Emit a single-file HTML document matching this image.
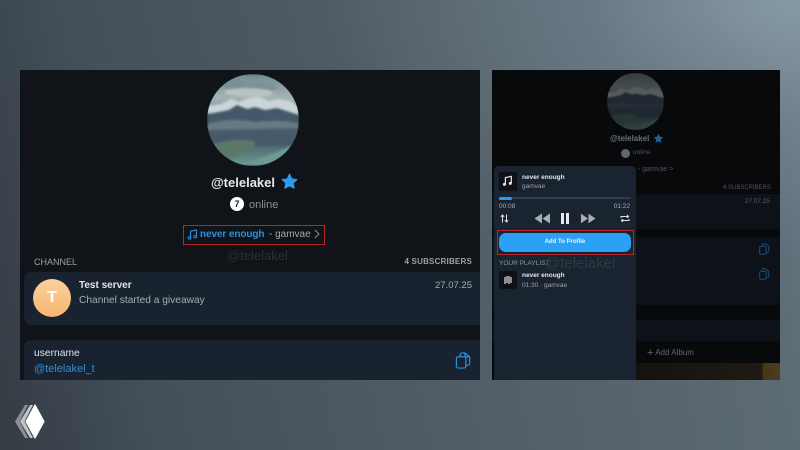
<!DOCTYPE html>
<html><head><meta charset="utf-8">
<style>
html,body{margin:0;padding:0}
body{width:800px;height:450px;overflow:hidden;position:relative;font-family:"Liberation Sans",sans-serif;background:linear-gradient(78deg,#343c44 0%,#444f57 18%,#525e67 55%,#5d6b75 90%,#6a7a85 100%)}
.bg2{position:absolute;inset:0;background:radial-gradient(ellipse 480px 260px at 800px 0,#8699a6 0%,rgba(134,153,166,.35) 45%,rgba(134,153,166,0) 100%)}
.a{position:absolute;white-space:nowrap}
.panel{position:absolute;overflow:hidden}
</style></head><body>
<div class="bg2"></div>

<div class="panel" style="left:20px;top:70px;width:460px;height:310px;background:#101317">
  <svg class="a" style="left:187px;top:4px" width="92" height="92" viewBox="0 0 92 92">
    <defs>
      <clipPath id="c1"><circle cx="46" cy="46" r="46"/></clipPath>
      <linearGradient id="sky" x1="0" y1="0" x2="0" y2="1"><stop offset="0" stop-color="#708a90"/><stop offset=".26" stop-color="#a6b4b4"/><stop offset=".5" stop-color="#5d717d"/><stop offset=".72" stop-color="#465c68"/><stop offset="1" stop-color="#6d9b94"/></linearGradient>
    </defs>
    <g clip-path="url(#c1)"><g style="filter:blur(1px)">
      <rect width="92" height="92" fill="url(#sky)"/>
      <path d="M10 6 Q30 2 42 10 Q55 6 72 14 L60 18 Q40 14 28 18 Q16 16 10 6Z" fill="#7b9096"/>
      <path d="M18 16 Q40 12 62 16 Q70 20 60 22 Q36 24 18 20Z" fill="#b9c3c2"/>
      <path d="M0 32 L14 30 L24 25 L32 28 L42 24 L52 23 L62 27 L72 25 L84 27 L92 34 L92 46 L0 46Z" fill="#cbd4d8"/>
      <path d="M0 40 L12 38 L22 36 L30 31 L40 35 L48 33 L58 36 L70 34 L92 41 L92 50 L0 50Z" fill="#43596a"/>
      <path d="M0 50 Q24 43 48 48 Q70 45 92 49 L92 58 L0 58Z" fill="#667a84"/>
      <path d="M0 56 L92 54 L92 72 L0 72Z" fill="#44586a" opacity=".85"/>
      <path d="M0 72 Q22 64 42 66 Q52 68 46 74 Q30 84 16 88 L0 86Z" fill="#5a7868"/>
      <path d="M25 92 Q60 84 92 68 L92 92Z" fill="#6b9b94"/>
    </g></g>
  </svg>
  <div class="a" style="left:191px;top:105px;font-size:13px;font-weight:bold;color:#e6e8ea">@telelakel</div>
  <svg class="a" style="left:261px;top:103px" width="17" height="17" viewBox="0 0 24 24"><path d="M12 1.500l3.200 6.800 7.300.9-5.400 5 1.500 7.300L12 18l-6.600 3.500 1.500-7.300-5.400-5 7.300-.9z" fill="#2a9bf0" stroke="#2a9bf0" stroke-width="1.500" stroke-linejoin="round"/></svg>
  <div class="a" style="left:210px;top:127px;width:14px;height:14px;border-radius:50%;background:#fff;color:#15181c;font-size:9px;font-weight:bold;text-align:center;line-height:14px">7</div>
  <div class="a" style="left:229px;top:129px;font-size:11px;color:#8b9196">online</div>
  <div class="a" style="left:163px;top:155px;width:140px;height:18px;border:1px solid #b3272d"></div>
  <svg class="a" style="left:167px;top:159px" width="11" height="11" viewBox="0 0 13 14"><path d="M4 11V2.800L11.500 1.200V9.500" fill="none" stroke="#2a8fdc" stroke-width="1.400"/><ellipse cx="2.600" cy="11.300" rx="1.800" ry="1.500" fill="none" stroke="#2a8fdc" stroke-width="1.300"/><ellipse cx="10" cy="9.800" rx="1.800" ry="1.500" fill="none" stroke="#2a8fdc" stroke-width="1.300"/></svg>
  <div class="a" style="left:180px;top:159px;font-size:10px;font-weight:bold;color:#2a8fdc;letter-spacing:-.1px">never enough</div>
  <div class="a" style="left:249px;top:159px;font-size:10px;color:#a4a8ad">- gamvae</div>
  <svg class="a" style="left:294px;top:159px" width="6" height="10" viewBox="0 0 6 10"><path d="M1 1l4 4-4 4" fill="none" stroke="#8b9196" stroke-width="1"/></svg>
  <div class="a" style="left:207px;top:178px;font-size:13px;color:#2b3036">@telelakel</div>
  <div class="a" style="left:14px;top:187px;font-size:9px;color:#9ba1a7">CHANNEL</div>
  <div class="a" style="right:8px;top:187px;font-size:8px;font-weight:bold;color:#9ba1a7;letter-spacing:.2px">4 SUBSCRIBERS</div>
  <div class="a" style="left:4px;top:202px;width:456px;height:53px;background:#18232f;border-radius:7px 0 0 7px"></div>
  <div class="a" style="left:13px;top:209px;width:38px;height:38px;border-radius:50%;background:linear-gradient(#fcd29c,#f5b56f);color:#fff;font-size:16px;font-weight:bold;text-align:center;line-height:37px">T</div>
  <div class="a" style="left:59px;top:210px;font-size:10px;font-weight:bold;color:#e3e6e9">Test server</div>
  <div class="a" style="left:59px;top:225px;font-size:10.200px;color:#a5acb3">Channel started a giveaway</div>
  <div class="a" style="right:8px;top:210px;font-size:9.500px;color:#a5acb3">27.07.25</div>
  <div class="a" style="left:4px;top:270px;width:456px;height:40px;background:#18232f;border-radius:7px 0 0 0"></div>
  <div class="a" style="left:14px;top:278px;font-size:10.300px;color:#dfe3e6">username</div>
  <div class="a" style="left:14px;top:293px;font-size:11px;color:#2f8ed6">@telelakel_t</div>
  <svg class="a" style="left:435px;top:282px" width="17" height="17" viewBox="0 0 17 18" fill="none" stroke="#2a8fdc" stroke-width="1.300"><rect x="1" y="5" width="10" height="12" rx="2"/><path d="M5 5V3a2 2 0 0 1 2-2h3l5 4v7a2 2 0 0 1-2 2h-2"/><path d="M10 1v4h5"/></svg>
</div>

<div class="panel" style="left:492px;top:70px;width:288px;height:310px;background:#08090b">
  <svg class="a" style="left:115px;top:3px" width="57" height="57" viewBox="0 0 92 92" opacity=".4">
    <g clip-path="url(#c1)"><g style="filter:blur(1.500px)">
      <rect width="92" height="92" fill="url(#sky)"/>
      <path d="M0 32 L14 30 L24 25 L32 28 L42 24 L52 23 L62 27 L72 25 L84 27 L92 34 L92 46 L0 46Z" fill="#cbd4d8"/>
      <path d="M0 40 L12 38 L22 36 L30 31 L40 35 L48 33 L58 36 L70 34 L92 41 L92 50 L0 50Z" fill="#43596a"/>
      <path d="M0 56 L92 54 L92 72 L0 72Z" fill="#44586a"/>
      <path d="M0 72 Q22 64 42 66 Q52 68 46 74 Q30 84 16 88 L0 86Z" fill="#5a7868"/>
      <path d="M25 92 Q60 84 92 68 L92 92Z" fill="#6b9b94"/>
    </g></g>
  </svg>
  <div class="a" style="left:118px;top:64px;font-size:8px;font-weight:bold;color:#6a6f75">@telelakel</div>
  <svg class="a" style="left:161px;top:63px" width="11" height="11" viewBox="0 0 24 24"><path d="M12 1.500l3.200 6.800 7.300.9-5.400 5 1.500 7.300L12 18l-6.600 3.500 1.500-7.300-5.400-5 7.300-.9z" fill="#1d6297"/></svg>
  <div class="a" style="left:129px;top:79px;width:9px;height:9px;border-radius:50%;background:#62676c"></div>
  <div class="a" style="left:141px;top:79px;font-size:6.500px;color:#50545a">online</div>
  <div class="a" style="left:146px;top:96px;font-size:7px;color:#50545a">- gamvae &gt;</div>
  <div class="a" style="right:9px;top:115px;font-size:6px;color:#50545a">4 SUBSCRIBERS</div>
  <div class="a" style="left:0;top:124px;width:288px;height:35px;background:#0c1218"></div>
  <div class="a" style="right:10px;top:128px;font-size:6.500px;color:#5a5f65">27.07.25</div>
  <div class="a" style="left:0;top:167px;width:288px;height:68px;background:#0c1218"></div>
  <svg class="a" style="left:267px;top:173px" width="11" height="12" viewBox="0 0 17 18" fill="none" stroke="#174a72" stroke-width="1.600"><rect x="1" y="5" width="10" height="12" rx="2"/><path d="M5 5V3a2 2 0 0 1 2-2h3l5 4v7a2 2 0 0 1-2 2h-2"/></svg>
  <svg class="a" style="left:267px;top:198px" width="11" height="12" viewBox="0 0 17 18" fill="none" stroke="#174a72" stroke-width="1.600"><rect x="1" y="5" width="10" height="12" rx="2"/><path d="M5 5V3a2 2 0 0 1 2-2h3l5 4v7a2 2 0 0 1-2 2h-2"/></svg>
  <div class="a" style="left:0;top:250px;width:288px;height:21px;background:#0c1218"></div>
  <div class="a" style="left:155px;top:277px;font-size:8px;color:#63686d"><span style="font-size:11px;vertical-align:-1px">+</span> Add Album</div>
  <div class="a" style="left:144px;top:293px;width:144px;height:17px;background:linear-gradient(90deg,#15120e 0,#1f1a13 88%,#45351a 88%,#4e3c1c 100%)"></div>
</div>

<div class="a" style="left:494px;top:166px;width:142px;height:214px;background:#1a2430;border-radius:5px 5px 0 0"></div>
<div class="a" style="left:499px;top:172px;width:18px;height:19px;background:#0e1115;border-radius:2px"></div>
<svg class="a" style="left:502px;top:175px" width="11" height="12" viewBox="0 0 13 14"><path d="M4 11V3L11 1.500V9.500" fill="none" stroke="#e6e8ea" stroke-width="1.400"/><circle cx="2.800" cy="11" r="1.800" fill="#e6e8ea"/><circle cx="9.800" cy="9.800" r="1.800" fill="#e6e8ea"/></svg>
<div class="a" style="left:522px;top:174px;font-size:6.500px;font-weight:bold;color:#e3e6e9">never enough</div>
<div class="a" style="left:522px;top:183px;font-size:6.500px;color:#9ba3aa">gamvae</div>
<div class="a" style="left:499px;top:197px;width:132px;height:2px;background:#323d49"></div>
<div class="a" style="left:499px;top:196.500px;width:13px;height:3px;background:#2a9bf0;border-radius:2px"></div>
<div class="a" style="left:499px;top:203px;font-size:6.500px;color:#a3abb2">00:08</div>
<div class="a" style="right:170px;top:203px;font-size:6.500px;color:#a3abb2">01:22</div>
<svg class="a" style="left:500px;top:214px" width="9" height="9" viewBox="0 0 9 9" fill="none" stroke="#dfe3e6" stroke-width="1"><path d="M2.500 8.500V1M.8 2.800 2.500 1l1.700 1.800M6.500.5V8M4.800 6.200 6.500 8l1.700-1.800"/></svg>
<svg class="a" style="left:534px;top:213px" width="17" height="11" viewBox="0 0 17 11" fill="#a8aeb3"><path d="M8 .5v10L.5 5.500zM16 .5v10L8.500 5.500z"/></svg>
<div class="a" style="left:561px;top:213px;width:3px;height:11px;background:#e6e8ea"></div>
<div class="a" style="left:566px;top:213px;width:3px;height:11px;background:#e6e8ea"></div>
<svg class="a" style="left:580px;top:213px" width="16" height="11" viewBox="0 0 17 11" fill="#a8aeb3"><path d="M1 .5v10L8.500 5.500zM9 .5v10L16.500 5.500z"/></svg>
<svg class="a" style="left:620px;top:214px" width="10" height="9" viewBox="0 0 10 9" fill="none" stroke="#dfe3e6" stroke-width="1"><path d="M1 4V2.500h7.500M7 1l1.500 1.500L7 4M9 5v1.500H1.500M3 8 1.500 6.500 3 5"/></svg>
<div class="a" style="left:497px;top:230px;width:137px;height:25px;border:1px solid #b3272d;box-sizing:border-box"></div>
<div class="a" style="left:499px;top:233px;width:132px;height:19px;border-radius:7px;background:#2ca0f5;color:#e8f4fd;font-size:6px;font-weight:bold;text-align:center;line-height:19px">Add To Profile</div>
<div class="a" style="left:499px;top:260px;font-size:6.500px;color:#8f979e">YOUR PLAYLIST</div>
<div class="a" style="left:545px;top:255px;font-size:15px;color:#2e3944">@telelakel</div>
<div class="a" style="left:499px;top:271px;width:18px;height:18px;background:#0e1115;border-radius:2px"></div>
<svg class="a" style="left:503px;top:275px" width="10" height="10" viewBox="0 0 10 10" stroke="#dfe3e6" stroke-width="1.200"><path d="M2 2v7M4 1v7M6 1v8M8 2v6"/></svg>
<div class="a" style="left:522px;top:272px;font-size:6.500px;font-weight:bold;color:#e3e6e9">never enough</div>
<div class="a" style="left:522px;top:282px;font-size:6.500px;color:#9ba3aa">01:30 · gamvae</div>

<svg class="a" style="left:14px;top:404px" width="31" height="35" viewBox="0 0 31 35">
  <path d="M11 1 L1 17.500 L11 34 L14 34 L5.500 17.500 L14 1Z" fill="#8d9196"/>
  <path d="M16 1 L6 17.500 L16 34 L19 34 L10.500 17.500 L19 1Z" fill="#c2c4c7"/>
  <path d="M21 1 L30 17.500 L21 34 L12 17.500Z" fill="#fff" stroke="#fff" stroke-width="1.200" stroke-linejoin="round"/>
</svg>
</body></html>
